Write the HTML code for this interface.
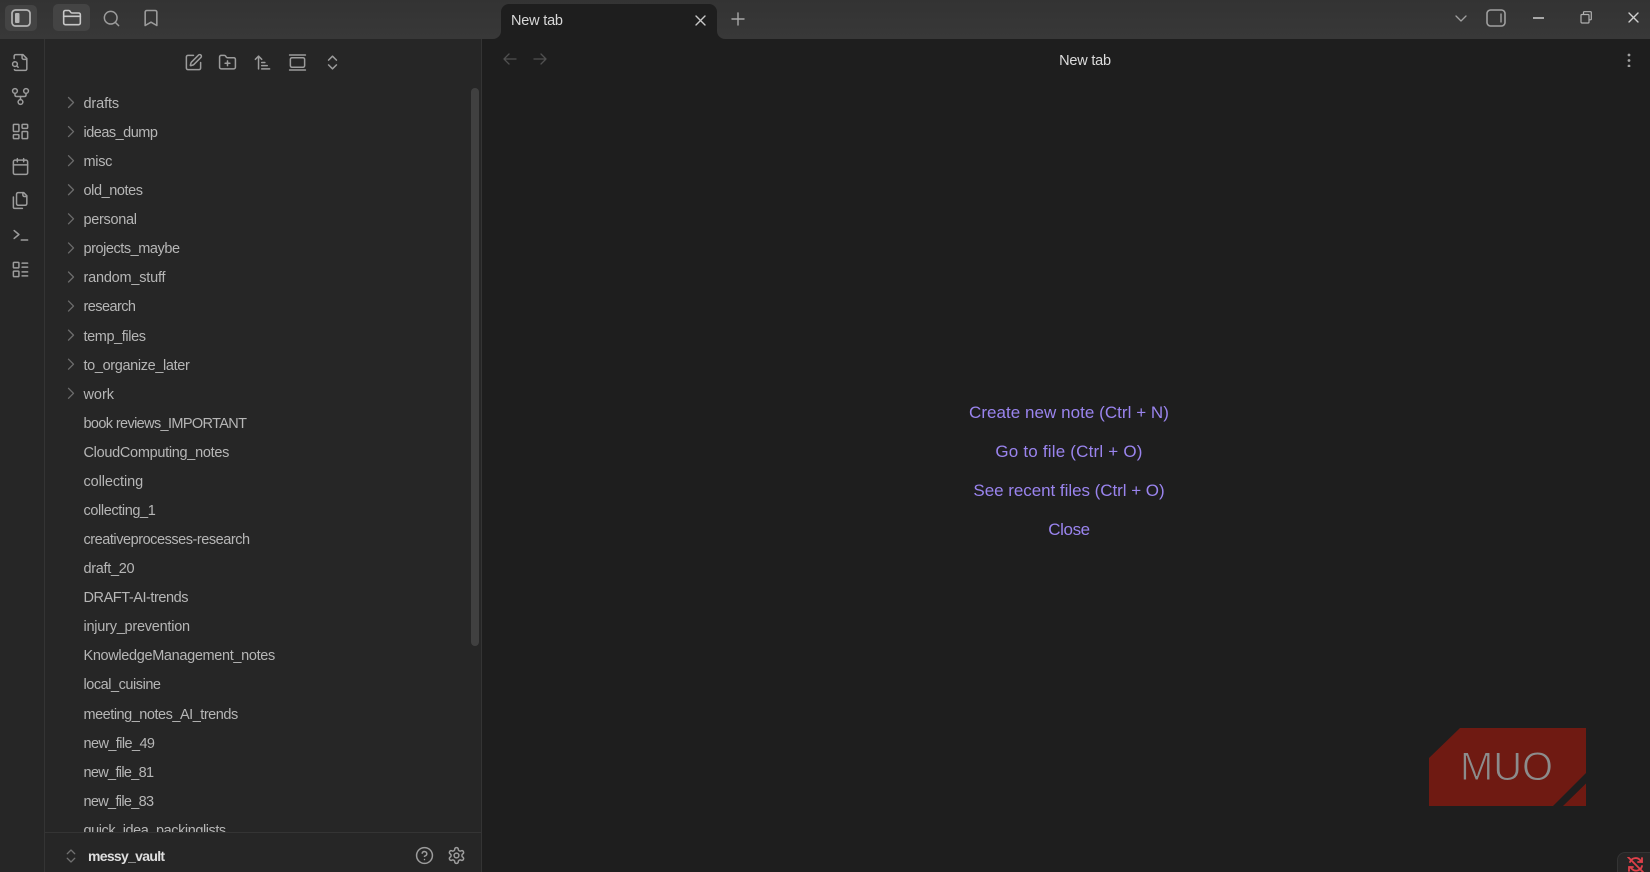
<!DOCTYPE html>
<html lang="en">
<head>
<meta charset="utf-8">
<title>New tab - messy_vault</title>
<style>
*{box-sizing:border-box}
html,body{margin:0;padding:0;width:1650px;height:872px;overflow:hidden;background:#1e1e1e;font-family:"Liberation Sans",sans-serif}
#app{position:relative;width:1650px;height:872px;overflow:hidden;contain:paint}
.abs{position:absolute}
.i{position:absolute;fill:none;stroke:#9c9c9c;stroke-width:1.900;stroke-linecap:round;stroke-linejoin:round;overflow:visible}
#titlebar{left:0;top:0;width:1650px;height:39px;background:linear-gradient(#333333,#383838)}
#ribbon{left:0;top:39px;width:45px;height:833px;background:#262626;border-right:1px solid #343434}
#side{left:45px;top:39px;width:437px;height:833px;background:#262626;border-right:1px solid #343434}
#files{left:45px;top:89.900px;width:436px;height:742.100px;overflow:hidden}
.row{height:29.080px;line-height:29px;padding-left:38.500px;font-size:14.500px;letter-spacing:-.3px;color:#b6b6b6;white-space:nowrap}
#scroll{left:471px;top:88px;width:8px;height:558px;background:#404040;border-radius:4px}
#foot{left:45px;top:832px;width:436px;height:40px;border-top:1px solid #343434;background:#262626}
#vault{left:88px;top:845.500px;font-size:14px;font-weight:bold;letter-spacing:-.7px;color:#dedede;line-height:20px}
#tab{left:501px;top:4px;width:216px;height:35px;background:#1e1e1e;border-radius:8px 8px 0 0}
#tabt{left:511px;top:11px;font-size:14.500px;letter-spacing:-.2px;color:#d8d8d8;line-height:20px}
#title{left:885px;width:400px;top:50.500px;text-align:center;font-size:14.500px;letter-spacing:-.2px;color:#dcdcdc;line-height:20px}
.lnk{left:869px;width:400px;text-align:center;font-size:17px;color:#9a84ee;line-height:22px}
#btn1{left:5px;top:5px;width:32px;height:26px;background:#444;border-radius:5px}
#btn2{left:53px;top:4px;width:37px;height:27px;background:#444;border-radius:5px}
#sync{left:1617px;top:852px;width:33px;height:20px;background:#262626;border-left:1px solid #343434;border-top:1px solid #343434;border-radius:8px 0 0 0}
</style>
</head>
<body>
<div id="app">
<svg width="0" height="0" style="position:absolute">
<defs>
<symbol id="filesearch" viewBox="0 0 24 24"><path d="M14 2v4a2 2 0 0 0 2 2h4"/><path d="M4.268 21a2 2 0 0 0 1.727 1H18a2 2 0 0 0 2-2V7l-5-5H6a2 2 0 0 0-2 2v3"/><path d="m9 18-1.500-1.500"/><circle cx="5" cy="14" r="3"/></symbol>
<symbol id="fork" viewBox="0 0 24 24"><circle cx="12" cy="19" r="3"/><circle cx="5" cy="5" r="3"/><circle cx="19" cy="5" r="3"/><path d="M19 8v2c0 1-.6 2-2 2H7c-1.400 0-2-1-2-2V8"/><path d="M12 12v4"/></symbol>
<symbol id="dash" viewBox="0 0 24 24"><rect x="3" y="3" width="7" height="9" rx="1"/><rect x="14" y="3" width="7" height="5" rx="1"/><rect x="14" y="12" width="7" height="9" rx="1"/><rect x="3" y="16" width="7" height="5" rx="1"/></symbol>
<symbol id="cal" viewBox="0 0 24 24"><path d="M8 2v4M16 2v4"/><rect x="3" y="4" width="18" height="18" rx="2"/><path d="M3 10h18"/></symbol>
<symbol id="files2" viewBox="0 0 24 24"><path d="M20 7h-3a2 2 0 0 1-2-2V2"/><path d="M9 18a2 2 0 0 1-2-2V4a2 2 0 0 1 2-2h7l4 4v10a2 2 0 0 1-2 2Z"/><path d="M3 7.600v12.800A1.600 1.600 0 0 0 4.600 22h9.800"/></symbol>
<symbol id="term" viewBox="0 0 24 24"><path d="m4 17 6-5-6-5"/><path d="M13 19h8"/></symbol>
<symbol id="list" viewBox="0 0 24 24"><rect x="3" y="3" width="7" height="7" rx="1"/><rect x="3" y="14" width="7" height="7" rx="1"/><path d="M14 4h7M14 9h7M14 15h7M14 20h7"/></symbol>
<symbol id="edit" viewBox="0 0 24 24"><path d="M12 3H5a2 2 0 0 0-2 2v14a2 2 0 0 0 2 2h14a2 2 0 0 0 2-2v-7"/><path d="M18.375 2.625a1 1 0 0 1 3 3l-9.013 9.014a2 2 0 0 1-.853.505l-2.873.84a.5.5 0 0 1-.62-.62l.84-2.873a2 2 0 0 1 .506-.852z"/></symbol>
<symbol id="folderplus" viewBox="0 0 24 24"><path d="M12 10v6M9 13h6"/><path d="M20 20a2 2 0 0 0 2-2V8a2 2 0 0 0-2-2h-7.900a2 2 0 0 1-1.690-.9L9.600 3.900A2 2 0 0 0 7.930 3H4a2 2 0 0 0-2 2v13a2 2 0 0 0 2 2Z"/></symbol>
<symbol id="folder" viewBox="0 0 24 24"><path d="M20 20a2 2 0 0 0 2-2V8a2 2 0 0 0-2-2h-7.900a2 2 0 0 1-1.690-.9L9.600 3.900A2 2 0 0 0 7.930 3H4a2 2 0 0 0-2 2v13a2 2 0 0 0 2 2Z"/><path d="M2 10h20"/></symbol>
<symbol id="search" viewBox="0 0 24 24"><circle cx="11" cy="11" r="8"/><path d="m21 21-4.300-4.300"/></symbol>
<symbol id="bookmark" viewBox="0 0 24 24"><path d="m19 21-7-4-7 4V5a2 2 0 0 1 2-2h10a2 2 0 0 1 2 2v16z"/></symbol>
<symbol id="sort" viewBox="0 0 24 24"><path d="m3 8 4-4 4 4"/><path d="M7 4v16"/><path d="M11 12h4M11 16h7M11 20h10"/></symbol>
<symbol id="gallery" viewBox="0 0 24 24"><rect x="3" y="6" width="18" height="12" rx="2"/><path d="M2 2.500h20M2 21.500h20"/></symbol>
<symbol id="updown" viewBox="0 0 24 24"><path d="m7 15 5 5 5-5"/><path d="m7 9 5-5 5 5"/></symbol>
<symbol id="help" viewBox="0 0 24 24"><circle cx="12" cy="12" r="10"/><path d="M9.090 9a3 3 0 0 1 5.830 1c0 2-3 3-3 3"/><path d="M12 17h.01"/></symbol>
<symbol id="gear" viewBox="0 0 24 24"><path d="M12.220 2h-.44a2 2 0 0 0-2 2v.18a2 2 0 0 1-1 1.730l-.43.25a2 2 0 0 1-2 0l-.15-.08a2 2 0 0 0-2.730.73l-.22.38a2 2 0 0 0 .73 2.730l.15.1a2 2 0 0 1 1 1.720v.51a2 2 0 0 1-1 1.740l-.15.09a2 2 0 0 0-.73 2.730l.22.38a2 2 0 0 0 2.730.73l.15-.08a2 2 0 0 1 2 0l.43.25a2 2 0 0 1 1 1.730V20a2 2 0 0 0 2 2h.44a2 2 0 0 0 2-2v-.18a2 2 0 0 1 1-1.730l.43-.25a2 2 0 0 1 2 0l.15.08a2 2 0 0 0 2.730-.73l.22-.39a2 2 0 0 0-.73-2.730l-.15-.08a2 2 0 0 1-1-1.740v-.5a2 2 0 0 1 1-1.740l.15-.09a2 2 0 0 0 .73-2.730l-.22-.38a2 2 0 0 0-2.730-.73l-.15.08a2 2 0 0 1-2 0l-.43-.25a2 2 0 0 1-1-1.730V4a2 2 0 0 0-2-2z"/><circle cx="12" cy="12" r="3"/></symbol>
</defs>
</svg>

<div class="abs" id="titlebar"></div>
<div class="abs" id="btn1"></div>
<div class="abs" id="btn2"></div>
<svg class="abs" style="left:11px;top:9px" width="20" height="18" viewBox="0 0 20 18" fill="none"><rect x="1" y="1" width="18" height="16" rx="3.500" stroke="#b5b5b5" stroke-width="1.700"/><rect x="4" y="4" width="4.500" height="10" rx="1" fill="#b5b5b5"/></svg>
<svg class="i" style="left:62px;top:8px;stroke:#c8c8c8" width="20" height="20"><use href="#folder"/></svg>
<svg class="i" style="left:102px;top:9px" width="19" height="19"><use href="#search"/></svg>
<svg class="i" style="left:141px;top:8px" width="20" height="20"><use href="#bookmark"/></svg>

<div class="abs" id="tab"></div>
<svg class="abs" style="left:493px;top:31px" width="8" height="8"><path d="M0 8A8 8 0 0 0 8 0V8Z" fill="#1e1e1e"/></svg>
<svg class="abs" style="left:717px;top:31px" width="8" height="8"><path d="M8 8A8 8 0 0 1 0 0V8Z" fill="#1e1e1e"/></svg>
<div class="abs" id="tabt">New tab</div>
<svg class="abs" style="left:695px;top:15px" width="11" height="11" fill="none" stroke="#c8c8c8" stroke-width="1.400" stroke-linecap="round"><path d="M1 1l9 9M10 1L1 10"/></svg>
<svg class="abs" style="left:731px;top:12px" width="14" height="14" fill="none" stroke="#a8a8a8" stroke-width="1.400" stroke-linecap="round"><path d="M7 1v12M1 7h12"/></svg>

<svg class="abs" style="left:1455px;top:14px" width="12" height="9" fill="none" stroke="#a0a0a0" stroke-width="1.300" stroke-linecap="round" stroke-linejoin="round"><path d="M1 2l5 5 5-5"/></svg>
<svg class="abs" style="left:1486px;top:9px" width="20" height="18" fill="none" stroke="#a0a0a0"><rect x="1" y="1" width="18" height="16" rx="3.500" stroke-width="1.600"/><path d="M15 4.500v9" stroke-width="1.400"/></svg>
<div class="abs" style="left:1533px;top:17px;width:11px;height:1.500px;background:#a8a8a8"></div>
<svg class="abs" style="left:1580px;top:11px" width="12" height="13" fill="none" stroke="#b0b0b0" stroke-width="1.200"><rect x="1" y="3.500" width="8" height="8.500" rx="1"/><path d="M3.500 3.500V1.500a.8.8 0 0 1 .8-.8H10.500a.8.8 0 0 1 .8.8V8a.8.8 0 0 1-.8.8H9"/></svg>
<svg class="abs" style="left:1628px;top:12px" width="11" height="11" fill="none" stroke="#d0d0d0" stroke-width="1.400" stroke-linecap="round"><path d="M1 1l9 9M10 1L1 10"/></svg>

<div class="abs" id="ribbon"></div>
<svg class="i" style="left:11px;top:52.500px" width="19" height="19"><use href="#filesearch"/></svg>
<svg class="i" style="left:11px;top:87px" width="19" height="19"><use href="#fork"/></svg>
<svg class="i" style="left:11px;top:121.500px" width="19" height="19"><use href="#dash"/></svg>
<svg class="i" style="left:11px;top:156.500px" width="19" height="19"><use href="#cal"/></svg>
<svg class="i" style="left:11px;top:190.500px" width="19" height="19"><use href="#files2"/></svg>
<svg class="i" style="left:11px;top:225px" width="19" height="19"><use href="#term"/></svg>
<svg class="i" style="left:11px;top:259.500px" width="19" height="19"><use href="#list"/></svg>

<div class="abs" id="side"></div>
<svg class="i" style="left:184px;top:52.500px" width="19" height="19"><use href="#edit"/></svg>
<svg class="i" style="left:218px;top:52.500px" width="19" height="19"><use href="#folderplus"/></svg>
<svg class="i" style="left:253px;top:52.500px" width="19" height="19"><use href="#sort"/></svg>
<svg class="i" style="left:288px;top:52.500px" width="19" height="19"><use href="#gallery"/></svg>
<svg class="i" style="left:322.500px;top:52.500px" width="19" height="19"><use href="#updown"/></svg>

<div class="abs" id="files">
<div class="row" style="letter-spacing:-.13px">drafts</div>
<div class="row" style="letter-spacing:-.51px">ideas_dump</div>
<div class="row">misc</div>
<div class="row" style="letter-spacing:-.42px">old_notes</div>
<div class="row">personal</div>
<div class="row" style="letter-spacing:-.45px">projects_maybe</div>
<div class="row" style="letter-spacing:-.21px">random_stuff</div>
<div class="row" style="letter-spacing:-.56px">research</div>
<div class="row" style="letter-spacing:-.4px">temp_files</div>
<div class="row" style="letter-spacing:-.36px">to_organize_later</div>
<div class="row" style="letter-spacing:-.04px">work</div>
<div class="row" style="letter-spacing:-.63px">book reviews_IMPORTANT</div>
<div class="row">CloudComputing_notes</div>
<div class="row" style="letter-spacing:-.09px">collecting</div>
<div class="row" style="letter-spacing:-.39px">collecting_1</div>
<div class="row" style="letter-spacing:-.46px">creativeprocesses-research</div>
<div class="row">draft_20</div>
<div class="row" style="letter-spacing:-.44px">DRAFT-AI-trends</div>
<div class="row" style="letter-spacing:-.24px">injury_prevention</div>
<div class="row" style="letter-spacing:-.34px">KnowledgeManagement_notes</div>
<div class="row" style="letter-spacing:-.46px">local_cuisine</div>
<div class="row" style="letter-spacing:-.48px">meeting_notes_AI_trends</div>
<div class="row" style="letter-spacing:-.59px">new_file_49</div>
<div class="row" style="letter-spacing:-.68px">new_file_81</div>
<div class="row" style="letter-spacing:-.68px">new_file_83</div>
<div class="row" style="letter-spacing:-.44px">quick_idea_packinglists</div>
</div>
<svg class="abs" style="left:67px;top:96px" width="9" height="305" fill="none" stroke="#6c6c6c" stroke-width="1.300" stroke-linecap="round" stroke-linejoin="round">
<path d="M1.500 1.500l5 5-5 5"/>
<path transform="translate(0,29.080)" d="M1.500 1.500l5 5-5 5"/>
<path transform="translate(0,58.160)" d="M1.500 1.500l5 5-5 5"/>
<path transform="translate(0,87.240)" d="M1.500 1.500l5 5-5 5"/>
<path transform="translate(0,116.320)" d="M1.500 1.500l5 5-5 5"/>
<path transform="translate(0,145.400)" d="M1.500 1.500l5 5-5 5"/>
<path transform="translate(0,174.480)" d="M1.500 1.500l5 5-5 5"/>
<path transform="translate(0,203.560)" d="M1.500 1.500l5 5-5 5"/>
<path transform="translate(0,232.640)" d="M1.500 1.500l5 5-5 5"/>
<path transform="translate(0,261.720)" d="M1.500 1.500l5 5-5 5"/>
<path transform="translate(0,290.800)" d="M1.500 1.500l5 5-5 5"/>
</svg>
<div class="abs" id="scroll"></div>

<div class="abs" id="foot"></div>
<svg class="i" style="left:62px;top:847px;stroke:#707070;stroke-width:1.700" width="18" height="18"><use href="#updown"/></svg>
<div class="abs" id="vault">messy_vault</div>
<svg class="i" style="left:415px;top:846px" width="19" height="19"><use href="#help"/></svg>
<svg class="i" style="left:447px;top:846px" width="19" height="19"><use href="#gear"/></svg>

<svg class="abs" style="left:503px;top:53px" width="14" height="12" fill="none" stroke="#505050" stroke-width="1.300" stroke-linecap="round" stroke-linejoin="round"><path d="M6 1L1 6l5 5M1 6h12"/></svg>
<svg class="abs" style="left:533px;top:53px" width="14" height="12" fill="none" stroke="#505050" stroke-width="1.300" stroke-linecap="round" stroke-linejoin="round"><path d="M8 1l5 5-5 5M13 6H1"/></svg>
<div class="abs" id="title">New tab</div>
<svg class="abs" style="left:1627px;top:53px" width="4" height="14" fill="#a0a0a0"><circle cx="2" cy="2" r="1.400"/><circle cx="2" cy="7.500" r="1.400"/><circle cx="2" cy="13" r="1.400"/></svg>

<div class="abs lnk" style="top:402px;letter-spacing:.04px">Create new note (Ctrl + N)</div>
<div class="abs lnk" style="top:441px;letter-spacing:.2px">Go to file (Ctrl + O)</div>
<div class="abs lnk" style="top:480px;letter-spacing:-.04px">See recent files (Ctrl + O)</div>
<div class="abs lnk" style="top:519px;letter-spacing:-.4px">Close</div>

<svg class="abs" style="left:1429px;top:728px" width="157" height="78" viewBox="0 0 157 78">
<path d="M31 0H157V45L124 78H0V30Z" fill="#6f1a12"/>
<path d="M157 55.500V78H134Z" fill="#6f1a12"/>
<text x="31" y="52" font-family="Liberation Sans, sans-serif" font-size="40" fill="#8c8c8c" stroke="#6f1a12" stroke-width="1" textLength="93" lengthAdjust="spacingAndGlyphs">MUO</text>
</svg>

<div class="abs" id="sync"></div>
<svg class="abs" style="left:1627px;top:857px" width="17" height="15" fill="none" stroke="#e0404a" stroke-width="1.800" stroke-linecap="round"><path d="M1 0l15 15"/><path d="M3 5a6 6 0 0 1 10-2l2 2M15 9a6 6 0 0 1-10 3l-2-2"/><path d="M15 1v4h-4M2 14v-4h4"/></svg>
</div>
</body>
</html>
